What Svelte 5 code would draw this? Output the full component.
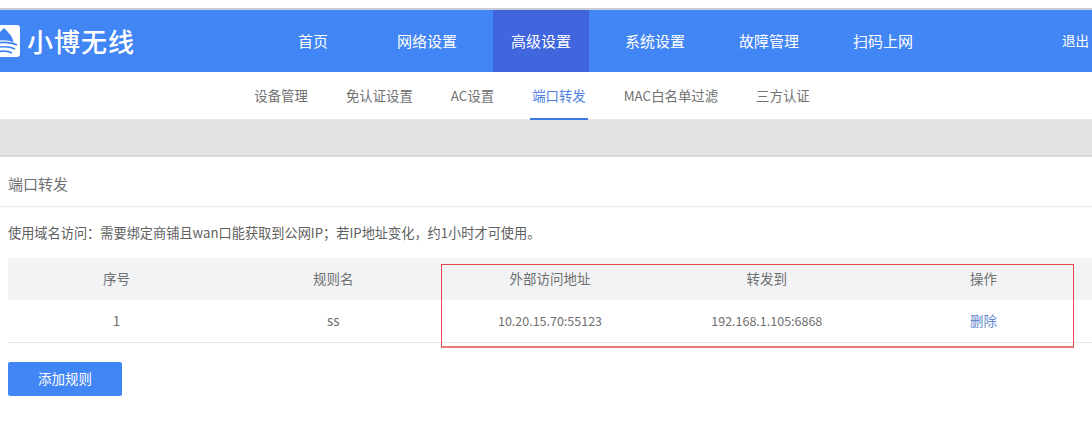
<script lang="ts">
  const mainNav = ['首页', '网络设置', '高级设置', '系统设置', '故障管理', '扫码上网'];
  const subNav = ['设备管理', '免认证设置', 'AC设置', '端口转发', 'MAC白名单过滤', '三方认证'];
  const columns = ['序号', '规则名', '外部访问地址', '转发到', '操作'];
  const rules = [{ id: 1, name: 'ss', external: '10.20.15.70:55123', target: '192.168.1.105:6868' }];
</script>

<div class="page">
  <header class="topbar">
    <div class="brand">
      <svg class="logo-mark" viewBox="0 0 32 32" width="32" height="32" aria-hidden="true">
        <rect width="32" height="32" rx="3" fill="#fff" />
        <path d="M16 3 C20 7 24.500 11 25.500 17.500 C20 14.500 12 14.500 6.500 17.500 C7.500 11 12 7 16 3 Z" fill="#3f83f3" />
        <path d="M3 20 C10 16.500 22 16.500 29 20" fill="none" stroke="#3f83f3" stroke-width="1.700" />
        <path d="M5 24 C11 21 21 21 27 24" fill="none" stroke="#3f83f3" stroke-width="1.700" />
        <path d="M8 28 C12 25.500 20 25.500 24 28" fill="none" stroke="#3f83f3" stroke-width="1.700" />
      </svg>
      <span class="brand-name">小博无线</span>
    </div>
    <nav class="main-nav">
      {#each mainNav as item}
        <a class="main-link" class:active={item === '高级设置'} href="#top">{item}</a>
      {/each}
    </nav>
    <a class="logout" href="#top">退出</a>
  </header>

  <nav class="sub-nav">
    {#each subNav as item}
      <a class="sub-link" class:active={item === '端口转发'} href="#top">{item}</a>
    {/each}
  </nav>

  <div class="band"></div>

  <main class="content">
    <h1 class="title">端口转发</h1>
    <div class="body">
      <p class="note">使用域名访问：需要绑定商铺且wan口能获取到公网IP；若IP地址变化，约1小时才可使用。</p>
      <div class="table-wrap">
        <table>
          <thead>
            <tr>
              {#each columns as col}<th>{col}</th>{/each}
            </tr>
          </thead>
          <tbody>
            {#each rules as rule (rule.id)}
              <tr>
                <td>{rule.id}</td>
                <td>{rule.name}</td>
                <td class="addr">{rule.external}</td>
                <td class="addr">{rule.target}</td>
                <td><a class="delete" href="#top">删除</a></td>
              </tr>
            {/each}
          </tbody>
        </table>
        <!-- 截图上的红色标注框 -->
        <div class="annotation"></div>
      </div>
      <button type="button" class="add-btn">添加规则</button>
    </div>
  </main>
</div>

<style>
  :global(body) {
    margin: 0;
    background: #fff;
  }

  .page {
    height: 433px;
    overflow: hidden;
    padding-top: 8px;
    box-sizing: border-box;
    font-family: "Noto Sans CJK SC", "Noto Sans", sans-serif;
    color: #707070;
  }

  a {
    text-decoration: none;
    color: inherit;
  }

  .topbar {
    display: flex;
    height: 62px;
    border-top: 2px solid #c9ccd3;
    background: #4285f4;
    color: #fff;
  }

  .brand {
    display: flex;
    align-items: center;
    gap: 7px;
    width: 265px;
    margin-left: -12px;
    flex-shrink: 0;
    box-sizing: border-box;
  }

  .logo-mark {
    flex-shrink: 0;
  }

  .brand-name {
    font-size: 26px;
    font-weight: 500;
    letter-spacing: 1px;
    line-height: 1;
  }

  .main-nav {
    display: flex;
    gap: 18px;
    margin-left: 12px;
  }

  .main-link {
    display: flex;
    align-items: center;
    justify-content: center;
    width: 96px;
    padding-bottom: 2px;
    font-size: 15px;
  }

  .main-link.active {
    background: #4066de;
  }

  .logout {
    display: flex;
    align-items: center;
    margin-left: auto;
    margin-right: 3px;
    padding-bottom: 2px;
    font-size: 13.500px;
  }

  .sub-nav {
    display: flex;
    justify-content: center;
    gap: 34px;
    height: 48px;
    padding-right: 28px;
    box-sizing: border-box;
    border-bottom: 1px solid #e6e6e6;
  }

  .sub-link {
    display: flex;
    align-items: center;
    padding: 0 2px 2px;
    margin-bottom: -1px;
    font-size: 13.400px;
    color: #707070;
  }

  .sub-link.active {
    color: #4f82e2;
    padding-bottom: 0;
    border-bottom: 2px solid #3f78e0;
  }

  .band {
    height: 35px;
    background: #e3e3e3;
    border-bottom: 2px solid #d8d8d8;
  }

  .title {
    margin: 0;
    height: 49px;
    line-height: 54px;
    padding-left: 8px;
    font-size: 15px;
    font-weight: 400;
    color: #707070;
    border-bottom: 1px solid #ececec;
  }

  .body {
    padding-left: 8px;
  }

  .note {
    margin: 0;
    height: 51px;
    line-height: 52px;
    font-size: 13.200px;
    color: #606060;
    white-space: nowrap;
  }

  .table-wrap {
    position: relative;
  }

  table {
    width: 100%;
    table-layout: fixed;
    border-collapse: collapse;
    font-size: 13.500px;
    text-align: center;
  }

  th {
    height: 40px;
    padding: 0 0 2px;
    background: #f2f3f5;
    font-weight: 400;
    color: #707070;
  }

  td {
    height: 40px;
    padding: 0 0 2px;
    border-bottom: 1px solid #e8e8e8;
    color: #707070;
  }

  td.addr {
    font-size: 12.500px;
  }

  .delete {
    color: #6487cc;
  }

  .annotation {
    position: absolute;
    left: 433px;
    top: 6px;
    width: 631px;
    height: 81px;
    border: 1px solid #e5484f;
    border-bottom: 2px solid #ea7680;
  }

  .add-btn {
    display: block;
    width: 114px;
    height: 34px;
    margin-top: 19px;
    padding: 0 0 2px;
    border: 0;
    border-radius: 2px;
    background: #4285f4;
    color: #fff;
    font-family: inherit;
    font-size: 13.500px;
  }
</style>
